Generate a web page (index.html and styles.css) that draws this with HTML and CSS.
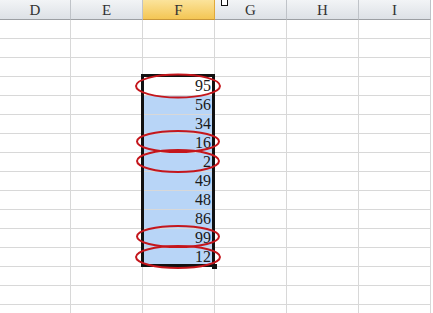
FILE: index.html
```html
<!DOCTYPE html>
<html lang="en">

<head>
    <meta charset="UTF-8">
    <title>Sheet</title>
    <link rel="stylesheet" href="styles.css">
</head>

<body>
    <div class="sheet">
        <div class="grid">
            <div class="head">D</div>
            <div class="head">E</div>
            <div class="head active">F</div>
            <div class="head">G</div>
            <div class="head">H</div>
            <div class="head">I</div>
        </div>
        <div class="grid" id="rows"></div>

        <!-- overlays: selection box, fill handle, marker, red circles -->
        <div class="selection"></div>
        <div class="fill-handle"></div>
        <div class="marker"></div>
        <svg class="circles" width="433" height="313" viewBox="0 0 433 313">
            <ellipse cx="178" cy="86" rx="42" ry="11.5" />
            <ellipse cx="178" cy="141.5" rx="41" ry="10.5" />
            <ellipse cx="178" cy="161" rx="41" ry="11" />
            <ellipse cx="178" cy="236.5" rx="41" ry="10.5" />
            <ellipse cx="178" cy="257" rx="42" ry="11" />
        </svg>
    </div>

    <script>
        const values = [null, null, null, 95, 56, 34, 16, 2, 49, 48, 86, 99, 12, null, null, null];
        const rows = document.getElementById('rows');
        values.forEach((v, i) => {
            for (let c = 0; c < 6; c++) {
                const cell = document.createElement('div');
                cell.className = 'cell';
                if (c === 2 && v !== null) {
                    cell.textContent = v;
                    cell.classList.add(i === 3 ? 'current' : 'picked');
                }
                rows.appendChild(cell);
            }
        });
    </script>
</body>

</html>
```

FILE: styles.css
```css
body {
    margin: 0;
    background: #ffffff;
    overflow: hidden;
}

.sheet {
    position: relative;
    width: 433px;
    height: 313px;
    overflow: hidden;
}

.grid {
    display: grid;
    grid-template-columns: 71px 72px 72px 72px 72px 72px;
}

.head {
    height: 19px;
    line-height: 20px;
    text-align: center;
    font-family: "Liberation Serif", serif;
    font-size: 15px;
    color: #333333;
    background: linear-gradient(#f2f4f6, #dde1e6);
    border-right: 1px solid #bfc3c8;
    border-bottom: 1px solid #9c9fa3;
}

.head.active {
    background: linear-gradient(#fbe39b, #f4c654);
    border-right-color: #e0a93a;
    border-bottom-color: #c9973a;
}

.cell {
    height: 18px;
    line-height: 18px;
    border-right: 1px solid #d8d8d8;
    border-bottom: 1px solid #d8d8d8;
    text-align: right;
    padding-right: 3px;
    font-family: "Liberation Serif", serif;
    font-size: 16px;
    color: #1a1a1a;
}

.cell.picked {
    background: #b8d5f7;
}

.cell.current {
    background: #ffffff;
}

.selection {
    position: absolute;
    left: 141px;
    top: 74px;
    width: 68px;
    height: 187px;
    border: 3px solid #111111;
}

.fill-handle {
    position: absolute;
    left: 212px;
    top: 264px;
    width: 5px;
    height: 5px;
    background: #111111;
}

.marker {
    position: absolute;
    left: 221px;
    top: -1px;
    width: 5px;
    height: 5px;
    background: #ffffff;
    border: 1px solid #111111;
}

.circles {
    position: absolute;
    left: 0;
    top: 0;
}

.circles ellipse {
    fill: none;
    stroke: #c4161c;
    stroke-width: 2;
}
```
